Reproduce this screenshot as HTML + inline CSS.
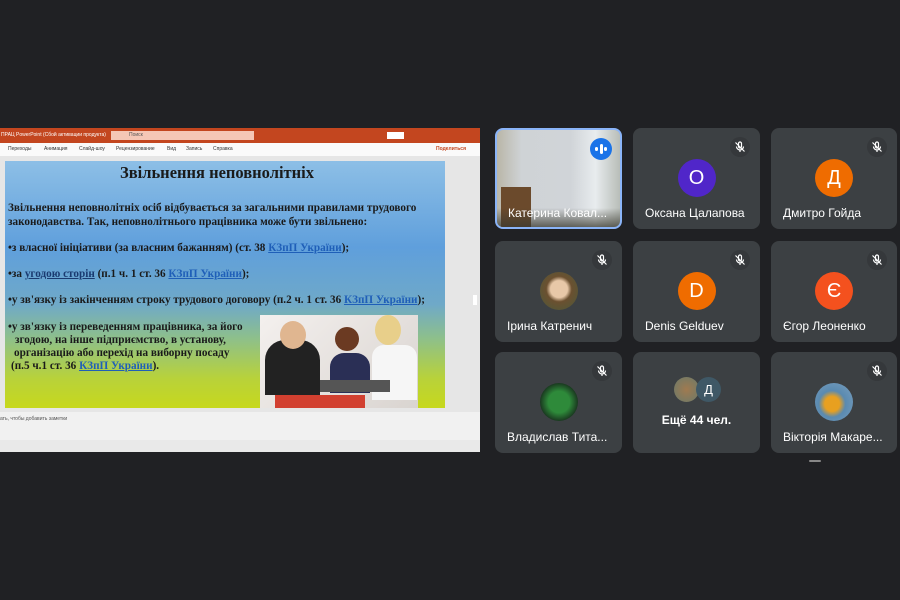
<!DOCTYPE html>
<html><head><meta charset="utf-8"><style>
*{margin:0;padding:0;box-sizing:border-box}
body{width:900px;height:600px;background:#202124;position:relative;overflow:hidden;font-family:"Liberation Sans",sans-serif}
.win{position:absolute;left:0;top:128px;width:480px;height:324px;background:#e8e8e8}
.tb{position:absolute;left:0;top:0;width:480px;height:15px;background:#c3461f;color:#fff;font-size:5px;line-height:15px}
.search{position:absolute;left:111px;top:3px;width:143px;height:9px;background:#f5c7b6;color:#555;font-size:5px;line-height:9px;padding-left:18px}
.rb{position:absolute;left:0;top:15px;width:480px;height:13px;background:#fafafa;font-size:5px;color:#333;line-height:13px}
.rb span{position:absolute}
.sa{position:absolute;left:0;top:28px;width:480px;height:256px;background:#e6e6e6}
.slide{position:absolute;left:5px;top:161px;width:440px;height:247px;background:linear-gradient(180deg,#8dbfe6 0%,#5f9fdc 35%,#6fa9c8 58%,#8ec08a 72%,#b8d23a 88%,#c7d81d 100%);font-family:"Liberation Serif",serif;font-weight:bold;color:#1a1a1a}
.slide p{position:absolute;font-size:11.2px;white-space:nowrap}
.lk{color:#1f5fb8;text-decoration:underline}
.notes{position:absolute;left:0;top:412px;width:480px;height:28px;background:#f1f1f1;font-size:5px;color:#555;padding:4px 0}
.sb{position:absolute;left:0;top:440px;width:480px;height:12px;background:#e9e9e9}
.t{position:absolute;background:#3c4043;border-radius:8px;color:#fff;font-size:12px}
.t .n{position:absolute;left:12px;bottom:9px;white-space:nowrap}
.av{position:absolute;left:50%;top:31px;margin-left:-19px;width:38px;height:38px;border-radius:50%;color:#fff;font-size:20px;text-align:center;line-height:38px}
.mic{position:absolute;right:10px;top:9px;width:20px;height:20px;border-radius:50%;background:#35383b}
.mic svg{position:absolute;left:4px;top:4px}
</style></head><body>
<div class="win">
 <div class="tb"><span style="margin-left:1px">ПРАЦ  PowerPoint (Сбой активации продукта)</span>
  <div class="search">Поиск</div>
  <div style="position:absolute;left:387px;top:4px;width:17px;height:7px;background:#fff"></div>
 </div>
 <div class="rb"><span style="left:8px">Переходы</span><span style="left:44px">Анимация</span><span style="left:79px">Слайд-шоу</span><span style="left:116px">Рецензирование</span><span style="left:167px">Вид</span><span style="left:186px">Запись</span><span style="left:213px">Справка</span><span style="left:436px;font-weight:bold;color:#c3461f">Поделиться</span></div>
 <div class="sa"></div>
</div>
<div class="slide">
 <p style="left:115px;top:2px;font-size:16.5px">Звільнення неповнолітніх</p>
 <p style="left:3px;top:41px">Звільнення неповнолітніх осіб відбувається за загальними правилами трудового</p>
 <p style="left:3px;top:55px">законодавства. Так, неповнолітнього працівника може бути звільнено:</p>
 <p style="left:3px;top:81px">•з власної ініціативи (за власним бажанням) (ст. 38 <span class="lk">КЗпП України</span>);</p>
 <p style="left:3px;top:107px">•за <span style="text-decoration:underline;color:#1a3a70">угодою сторін</span> (п.1 ч. 1 ст. 36 <span class="lk">КЗпП України</span>);</p>
 <p style="left:3px;top:133px">•у зв'язку із закінченням строку трудового договору (п.2 ч. 1 ст. 36 <span class="lk">КЗпП України</span>);</p>
 <p style="left:3px;top:160px">•у зв'язку із переведенням працівника, за його</p>
 <p style="left:10px;top:173px">згодою, на інше підприємство, в установу,</p>
 <p style="left:9px;top:186px">організацію або перехід на виборну посаду</p>
 <p style="left:6px;top:199px">(п.5 ч.1 ст. 36 <span class="lk">КЗпП України</span>).</p>
 <div style="position:absolute;left:255px;top:154px;width:158px;height:93px;background:linear-gradient(135deg,#f4f0ee,#d9d4d0);overflow:hidden">
  <div style="position:absolute;left:5px;top:25px;width:55px;height:55px;background:#222;border-radius:20px 20px 0 0"></div>
  <div style="position:absolute;left:20px;top:6px;width:26px;height:28px;background:#e0b690;border-radius:50%"></div>
  <div style="position:absolute;left:75px;top:12px;width:24px;height:24px;background:#6b3a22;border-radius:50%"></div>
  <div style="position:absolute;left:70px;top:38px;width:40px;height:40px;background:#2a2f55;border-radius:14px 14px 0 0"></div>
  <div style="position:absolute;left:115px;top:0;width:26px;height:30px;background:#e8cf8a;border-radius:50%"></div>
  <div style="position:absolute;left:112px;top:30px;width:45px;height:55px;background:#f6f6f6;border-radius:12px 12px 0 0"></div>
  <div style="position:absolute;left:15px;top:80px;width:90px;height:13px;background:#d24030"></div>
  <div style="position:absolute;left:60px;top:65px;width:70px;height:12px;background:#555"></div>
 </div>
</div>
<div class="notes"><span>ать, чтобы добавить заметки</span></div>
<div class="sb"></div>
<div style="position:absolute;left:473px;top:295px;width:4px;height:10px;background:#fff"></div>

<div class="t" style="left:495px;top:128px;width:127px;height:101px;border:2px solid #8ab4f8;background:linear-gradient(90deg,#b9b6a8 0%,#cfd3d6 20%,#d0d4d8 60%,#e8ecee 80%,#b8bdb8 100%);overflow:hidden">
 <div style="position:absolute;left:4px;top:57px;width:30px;height:42px;background:#6b4a2c"></div>
 <div style="position:absolute;left:0;top:78px;width:127px;height:25px;background:linear-gradient(0deg,#3a3a30,rgba(0,0,0,0))"></div>
 <div style="position:absolute;right:8px;top:8px;width:22px;height:22px;border-radius:50%;background:#1a73e8"><div style="position:absolute;left:5px;top:9px;width:3px;height:4px;background:#fff;border-radius:2px"></div><div style="position:absolute;left:9.5px;top:6px;width:3px;height:10px;background:#fff;border-radius:2px"></div><div style="position:absolute;left:14px;top:9px;width:3px;height:4px;background:#fff;border-radius:2px"></div></div>
 <span class="n" style="left:11px;bottom:7px">Катерина Ковал...</span>
</div>

<div class="t" style="left:633px;top:128px;width:127px;height:101px"><div class="mic"><svg width="12" height="12" viewBox="0 0 12 12" fill="none" stroke="#fff" stroke-width="1.2"><rect x="4.5" y="1" width="3" height="6" rx="1.5"/><path d="M2.5 5.5a3.5 3.5 0 0 0 7 0M6 9v2M1.5 1.5l9 9"/></svg></div><div class="av" style="background:#5026c9">О</div><span class="n">Оксана Цалапова</span></div>
<div class="t" style="left:771px;top:128px;width:126px;height:101px"><div class="mic"><svg width="12" height="12" viewBox="0 0 12 12" fill="none" stroke="#fff" stroke-width="1.2"><rect x="4.5" y="1" width="3" height="6" rx="1.5"/><path d="M2.5 5.5a3.5 3.5 0 0 0 7 0M6 9v2M1.5 1.5l9 9"/></svg></div><div class="av" style="background:#ef6c00">Д</div><span class="n">Дмитро Гойда</span></div>

<div class="t" style="left:495px;top:241px;width:127px;height:101px"><div class="mic"><svg width="12" height="12" viewBox="0 0 12 12" fill="none" stroke="#fff" stroke-width="1.2"><rect x="4.5" y="1" width="3" height="6" rx="1.5"/><path d="M2.5 5.5a3.5 3.5 0 0 0 7 0M6 9v2M1.5 1.5l9 9"/></svg></div><div class="av" style="background:radial-gradient(circle at 50% 45%,#e8c8a8 0 30%,#6b5030 45%,#4a5a3a 100%)"></div><span class="n">Ірина Катренич</span></div>
<div class="t" style="left:633px;top:241px;width:127px;height:101px"><div class="mic"><svg width="12" height="12" viewBox="0 0 12 12" fill="none" stroke="#fff" stroke-width="1.2"><rect x="4.5" y="1" width="3" height="6" rx="1.5"/><path d="M2.5 5.5a3.5 3.5 0 0 0 7 0M6 9v2M1.5 1.5l9 9"/></svg></div><div class="av" style="background:#ef6c00">D</div><span class="n">Denis Gelduev</span></div>
<div class="t" style="left:771px;top:241px;width:126px;height:101px"><div class="mic"><svg width="12" height="12" viewBox="0 0 12 12" fill="none" stroke="#fff" stroke-width="1.2"><rect x="4.5" y="1" width="3" height="6" rx="1.5"/><path d="M2.5 5.5a3.5 3.5 0 0 0 7 0M6 9v2M1.5 1.5l9 9"/></svg></div><div class="av" style="background:#f4511e">Є</div><span class="n">Єгор Леоненко</span></div>

<div class="t" style="left:495px;top:352px;width:127px;height:101px"><div class="mic"><svg width="12" height="12" viewBox="0 0 12 12" fill="none" stroke="#fff" stroke-width="1.2"><rect x="4.5" y="1" width="3" height="6" rx="1.5"/><path d="M2.5 5.5a3.5 3.5 0 0 0 7 0M6 9v2M1.5 1.5l9 9"/></svg></div><div class="av" style="background:radial-gradient(circle,#2e8a3a 0 40%,#1a3a20 70%,#222 100%)"></div><span class="n">Владислав Тита...</span></div>
<div class="t" style="left:633px;top:352px;width:127px;height:101px">
 <div style="position:absolute;left:41px;top:25px;width:25px;height:25px;border-radius:50%;background:radial-gradient(circle,#a07a50,#6a7a6a)"></div>
 <div style="position:absolute;left:63px;top:25px;width:25px;height:25px;border-radius:50%;background:#3f5866;text-align:center;line-height:25px;font-size:13px">Д</div>
 <span class="n" style="left:0;width:127px;text-align:center;bottom:26px;font-weight:bold">Ещё 44 чел.</span></div>
<div class="t" style="left:771px;top:352px;width:126px;height:101px"><div class="mic"><svg width="12" height="12" viewBox="0 0 12 12" fill="none" stroke="#fff" stroke-width="1.2"><rect x="4.5" y="1" width="3" height="6" rx="1.5"/><path d="M2.5 5.5a3.5 3.5 0 0 0 7 0M6 9v2M1.5 1.5l9 9"/></svg></div><div class="av" style="background:radial-gradient(circle at 45% 55%,#e8a020 0 25%,#5a8ab0 45%,#7aa0c0 100%)"></div><span class="n">Вікторія Макаре...</span></div>
<div style="position:absolute;left:809px;top:460px;width:12px;height:2px;background:#888;border-radius:1px"></div>
</body></html>
